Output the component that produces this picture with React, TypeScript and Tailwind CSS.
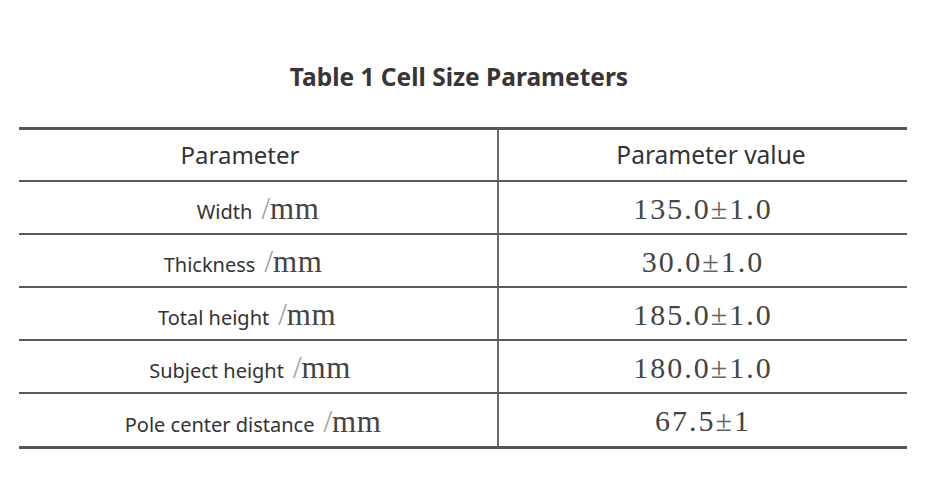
const rows = [
  { label: "Width", value: ["135.0", "1.0"], shift: "pr-0" },
  { label: "Thickness", value: ["30.0", "1.0"], shift: "pr-[30px]" },
  { label: "Total height", value: ["185.0", "1.0"], shift: "pr-[22px]" },
  { label: "Subject height", value: ["180.0", "1.0"], shift: "pr-[16px]" },
  { label: "Pole center distance", value: ["67.5", "1"], shift: "pr-[10px]" },
]

function Value({ a, b }: { a: string; b: string }) {
  return (
    <span className="font-['Liberation_Serif',serif] text-[30px] tracking-[2px] text-[#444]">
      {a}
      <span className="text-[#666]">±</span>
      {b}
    </span>
  )
}

export default function App() {
  return (
    <div className="w-[929px] h-[478px] bg-white pt-[60px] font-['Noto_Sans',sans-serif]">
      <h1 className="pr-[11px] text-center text-[24.5px] font-bold leading-[34px] text-[#3b3434]">
        Table 1 Cell Size Parameters
      </h1>

      <div className="ml-[19px] mt-[33px] w-[888px] border-t-[3px] border-b-[3px] border-[#555]">
        <div className="grid grid-cols-[480px_1fr] h-[52px] border-b-2 border-[#5a5a5a]">
          <div className="flex items-center justify-center border-r-2 border-[#6b6b6b] pr-[36px] text-[24px] text-[#333]">
            Parameter
          </div>
          <div className="flex items-center justify-center pl-[16px] text-[24.5px] text-[#333]">
            Parameter value
          </div>
        </div>

        {rows.map((r, i) => (
          <div
            key={r.label}
            className={
              i < rows.length - 1
                ? "grid grid-cols-[480px_1fr] h-[53px] border-b-2 border-[#5a5a5a]"
                : "grid grid-cols-[480px_1fr] h-[52px]"
            }
          >
            <div className={`flex items-center justify-center border-r-2 border-[#6b6b6b] ${r.shift}`}>
              <div className="flex items-baseline pt-[4px]">
                <span className="text-[20px] text-[#333]">{r.label}</span>
                <span className="ml-[9px] font-['Liberation_Serif',serif] text-[31px] text-[#a0a0a0]">/</span>
                <span className="font-['Liberation_Serif',serif] text-[31px] tracking-[0.5px] text-[#444]">mm</span>
              </div>
            </div>
            <div className="flex items-center justify-center pt-[1px]">
              <Value a={r.value[0]} b={r.value[1]} />
            </div>
          </div>
        ))}
      </div>
    </div>
  )
}
